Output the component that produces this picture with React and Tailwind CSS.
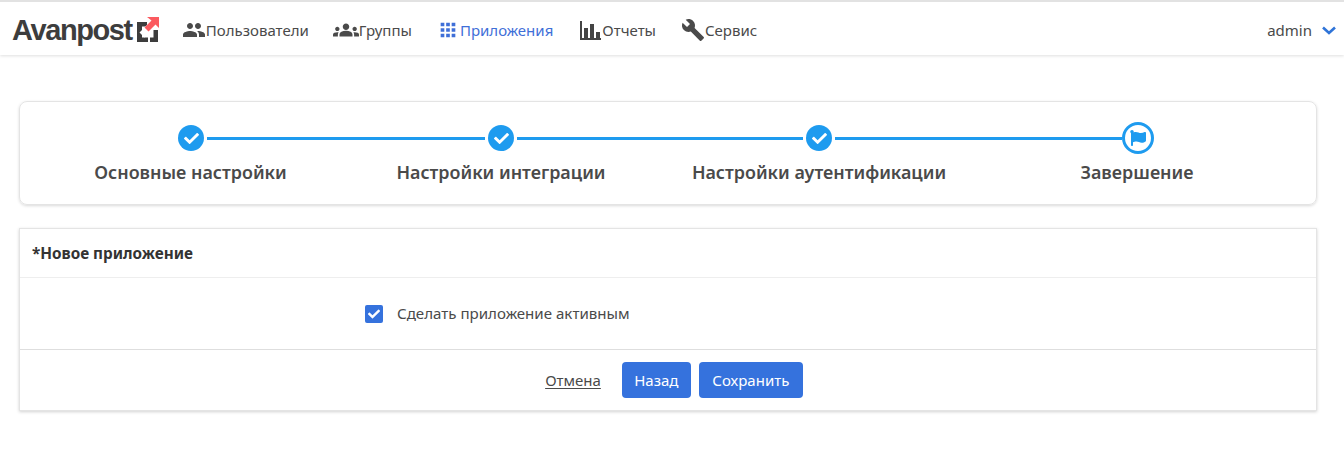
import React from "react";
import { FaCheck, FaFlag } from "react-icons/fa";
import { MdPeople, MdGroups, MdApps, MdBuild } from "react-icons/md";

const NavItem = ({ icon, label, active, className = "" }) => (
  <div className={"flex items-center " + (active ? "text-[#3f6fd8] " : "text-[#4a4a4a] ") + className}>
    {icon}
    <span>{label}</span>
  </div>
);

const Done = () => (
  <div className="flex h-[26px] w-[26px] shrink-0 items-center justify-center rounded-full bg-[#1e9bef] text-white">
    <FaCheck className="h-[15px] w-[15px]" />
  </div>
);

const Line = ({ className }) => <div className={"h-[3px] bg-[#1e9bef] " + className} />;

const Logo = () => (
  <div className="flex items-center">
    <span className="font-['Liberation_Sans',sans-serif] text-[29px] leading-none font-bold tracking-[-1.4px] text-[#3d3d3d]">
      Avanpost
    </span>
    <svg className="ml-[5px] mb-[2px]" width="22" height="26" viewBox="0 0 22 26">
      <path d="M0 6h10v4.500H5v11h6V26H0z" fill="#3d3d3d" />
      <path d="M21 14v12h-8v-4.500h3.500V14z" fill="#3d3d3d" />
      <path d="M5 19L14 10" fill="none" stroke="#fff" strokeWidth="7" />
      <path d="M10 1h12v11l-3.500-3.500-7 7-4-4 7-7z" fill="#fb5a5f" />
    </svg>
  </div>
);

const ChartIcon = () => (
  <svg className="mr-[1px]" width="21" height="19" viewBox="0 0 21 19" fill="#444444">
    <path d="M0 0h2v17h19v2H0z" />
    <path d="M4 7h4v10H4zM10 3h4v14h-4zM16 11h4v6h-4z" />
  </svg>
);

const Chevron = () => (
  <svg className="ml-[10px]" width="14" height="9" viewBox="0 0 14 9" fill="none" stroke="#2f74d8" strokeWidth="2.600">
    <path d="M1 1.500l6 5.500 6-5.500" />
  </svg>
);

export default function App() {
  return (
    <div className="h-[451px] overflow-hidden bg-white font-['Noto_Sans',sans-serif] text-[#4a4a4a]">
      <header className="flex h-[55px] items-center border-t-2 border-[#e2e2e2] pt-[3px] pr-[8px] pl-[12px] text-[15px] shadow-[0_1px_3px_rgba(0,0,0,0.13)]">
        <Logo />
        <nav className="ml-[23px] flex items-center">
          <NavItem icon={<MdPeople className="h-[24px] w-[24px]" />} label="Пользователи" />
          <NavItem className="ml-[24px]" icon={<MdGroups className="h-[26px] w-[26px]" />} label="Группы" />
          <NavItem className="ml-[25px]" active icon={<MdApps className="mr-[1px] h-[22px] w-[22px]" />} label="Приложения" />
          <NavItem className="ml-[27px]" icon={<ChartIcon />} label="Отчеты" />
          <NavItem className="ml-[25px]" icon={<MdBuild className="h-[24px] w-[24px]" />} label="Сервис" />
        </nav>
        <div className="ml-auto flex items-center">
          <span>admin</span>
          <Chevron />
        </div>
      </header>

      <main className="pt-[46px] pr-[27px] pl-[19px]">
        <section className="h-[104px] rounded-[8px] border border-[#e4e4e4] shadow-[0_1px_3px_rgba(0,0,0,0.15)]">
          <div className="flex h-[52px] items-end pl-[158px]">
            <div className="flex h-[32px] items-center">
              <Done />
              <Line className="mx-[3px] w-[278px]" />
              <Done />
              <Line className="mx-[3px] w-[286px]" />
              <Done />
              <Line className="ml-[3px] w-[287px]" />
              <div className="flex h-[32px] w-[32px] items-center justify-center rounded-full border-[3px] border-[#1e9bef] text-[#1e9bef]">
                <FaFlag className="h-[16px] w-[16px]" />
              </div>
            </div>
          </div>
          <div className="mt-[5px] grid grid-cols-[341px_280px_356px_280px] text-center text-[17.900px] leading-[26px] font-semibold">
            <div>Основные настройки</div>
            <div>Настройки интеграции</div>
            <div>Настройки аутентификации</div>
            <div>Завершение</div>
          </div>
        </section>

        <section className="mt-[23px] border border-[#e4e4e4] shadow-[0_1px_3px_rgba(0,0,0,0.18)]">
          <div className="flex h-[49px] items-center border-b border-[#eeeeee] pl-[12px] text-[15.300px] font-bold text-[#333333]">
            *Новое приложение
          </div>
          <div className="flex h-[72px] items-center border-b border-[#dedede] pl-[345px]">
            <div className="flex h-[18px] w-[18px] items-center justify-center rounded-[2px] bg-[#3572dd] text-white">
              <FaCheck className="h-[12px] w-[12px]" />
            </div>
            <span className="ml-[14px] text-[15.100px]">Сделать приложение активным</span>
          </div>
          <div className="flex h-[60px] items-center justify-center pl-[12px] text-[15px]">
            <a className="underline underline-offset-2">Отмена</a>
            <button className="ml-[21px] h-[36px] w-[69px] rounded-[4px] bg-[#3572dd] text-white">Назад</button>
            <button className="ml-[8px] h-[36px] w-[104px] rounded-[4px] bg-[#3572dd] text-white">Сохранить</button>
          </div>
        </section>
      </main>
    </div>
  );
}
